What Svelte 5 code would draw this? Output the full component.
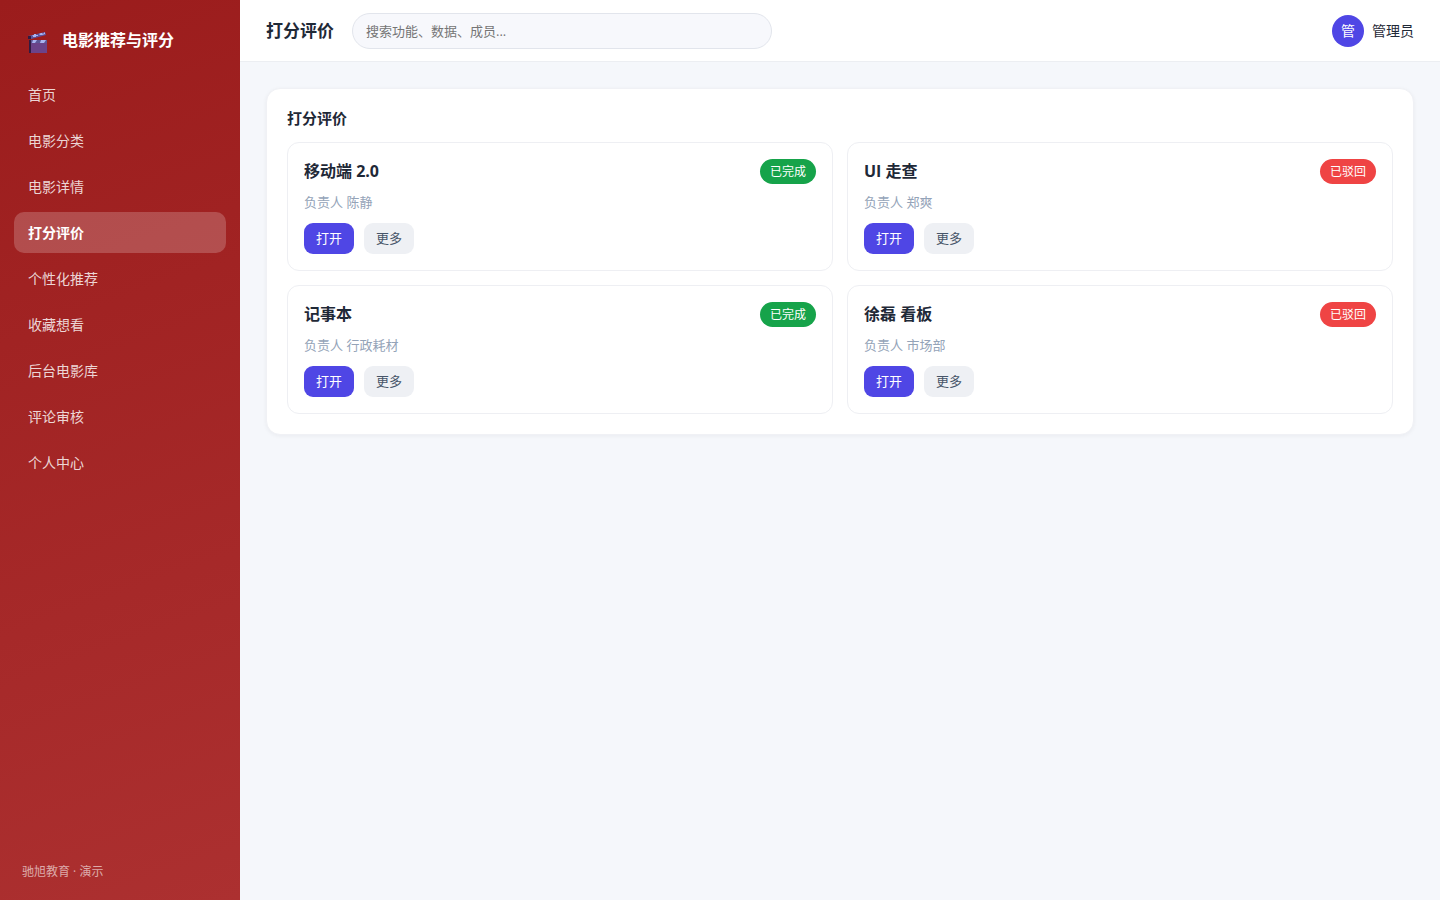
<script>
  let active = "打分评价";
  let keyword = "";

  const menu = [
    "首页",
    "电影分类",
    "电影详情",
    "打分评价",
    "个性化推荐",
    "收藏想看",
    "后台电影库",
    "评论审核",
    "个人中心"
  ];

  const items = [
    { title: "移动端 2.0", owner: "陈静", status: "已完成", type: "done" },
    { title: "UI 走查", owner: "郑爽", status: "已驳回", type: "rejected" },
    { title: "记事本", owner: "行政耗材", status: "已完成", type: "done" },
    { title: "徐磊 看板", owner: "市场部", status: "已驳回", type: "rejected" }
  ];
</script>

<div class="layout">
  <aside class="sidebar">
    <div class="brand">
      <svg class="logo" viewBox="0 -5 22 26" aria-hidden="true">
        <path d="M0 4 17 0l1 3L3 7H0z" fill="#5d55a0" />
        <path d="M0 4h3v3H0z" fill="#321b41" />
        <path d="M5 3h1V2h2v1h2v1H8v1H5V4H4zM11 2l2-1h1l1 1 2-2v2l-3 1h-2z" fill="#a9b4f0" />
        <path d="M1 8h18v13H1z" fill="#6b4389" />
        <path d="M3 8h16v3H3z" fill="#5b5796" />
        <path d="M5 8h4l-2 3H4zM13 8h5l-2 3h-4z" fill="#a9b4f0" />
        <path d="M1 8h2v13H1z" fill="#321b41" />
      </svg>
      <span>电影推荐与评分</span>
    </div>
    <nav class="menu">
      {#each menu as name}
        <a
          href="#{name}"
          class="menu-item"
          class:active={name === active}
          on:click|preventDefault={() => (active = name)}>{name}</a>
      {/each}
    </nav>
    <div class="copyright">驰旭教育 · 演示</div>
  </aside>

  <div class="main">
    <header class="topbar">
      <h1>{active}</h1>
      <input
        type="search"
        class="search"
        aria-label="搜索"
        placeholder="搜索功能、数据、成员..."
        bind:value={keyword} />
      <div class="user">
        <span class="avatar">管</span>
        <span>管理员</span>
      </div>
    </header>

    <main class="content">
      <section class="panel">
        <h2>{active}</h2>
        <div class="grid">
          {#each items as item}
            <article class="card">
              <div class="card-head">
                <h3>{item.title}</h3>
                <span class="badge {item.type}">{item.status}</span>
              </div>
              <p class="owner">负责人 {item.owner}</p>
              <div class="actions">
                <button type="button" class="btn primary">打开</button>
                <button type="button" class="btn">更多</button>
              </div>
            </article>
          {/each}
        </div>
      </section>
    </main>
  </div>
</div>

<style>
  :global(body) {
    margin: 0;
  }

  .layout {
    display: flex;
    min-height: 100vh;
    background: #f5f7fb;
    color: #1f2937;
    font-family: "Open Sans", "Noto Sans CJK SC", sans-serif;
    font-size: 14px;
    line-height: 21px;
  }

  .layout * {
    box-sizing: border-box;
  }

  h1,
  h2,
  h3,
  p {
    margin: 0;
  }

  .sidebar {
    display: flex;
    flex-direction: column;
    flex: 0 0 240px;
    padding: 18px 14px;
    background: linear-gradient(160deg, #9b1c1c, #ac3030);
    color: white;
  }

  .brand {
    display: flex;
    align-items: center;
    gap: 12px;
    padding: 9px 14px 21px;
    font-size: 16px;
    font-weight: 700;
    line-height: 24px;
  }

  .logo {
    width: 22px;
    height: 26px;
  }

  .menu {
    display: flex;
    flex-direction: column;
    gap: 5px;
  }

  .menu-item {
    padding: 10px 14px;
    border-radius: 10px;
    color: rgba(255, 255, 255, 0.82);
    text-decoration: none;
  }

  .menu-item.active {
    background: rgba(255, 255, 255, 0.2);
    color: white;
    font-weight: 700;
  }

  .copyright {
    margin-top: auto;
    padding: 0 8px;
    color: rgba(255, 255, 255, 0.6);
    font-size: 12px;
  }

  .main {
    flex: 1;
    min-width: 0;
  }

  .topbar {
    display: flex;
    align-items: center;
    gap: 18px;
    height: 62px;
    padding: 0 26px;
    background: white;
    border-bottom: 1px solid #eceef2;
  }

  h1 {
    font-size: 17px;
    font-weight: 700;
    line-height: 26px;
  }

  .search {
    width: 420px;
    height: 36px;
    padding: 0 13px;
    border: 1px solid #e2e5ec;
    border-radius: 18px;
    outline: none;
    background: #f7f8fc;
    color: inherit;
    font-family: inherit;
    font-size: 13px;
    appearance: none;
  }

  .search::placeholder {
    color: #757575;
  }

  .user {
    display: flex;
    align-items: center;
    gap: 8px;
    margin-left: auto;
  }

  .avatar {
    display: grid;
    place-items: center;
    width: 32px;
    height: 32px;
    border-radius: 50%;
    background: #4f46e5;
    color: white;
  }

  .content {
    padding: 26px;
  }

  .panel {
    padding: 20px;
    border: 1px solid #f0f1f5;
    border-radius: 14px;
    background: white;
    box-shadow: 0 1px 4px rgba(15, 23, 42, 0.05);
  }

  h2 {
    margin-bottom: 15px;
    font-size: 15px;
    font-weight: 700;
    line-height: 18px;
  }

  .grid {
    display: grid;
    grid-template-columns: 1fr 1fr;
    gap: 14px;
  }

  .card {
    padding: 16px;
    border: 1px solid #eeeff3;
    border-radius: 12px;
  }

  .card-head {
    display: flex;
    align-items: center;
    justify-content: space-between;
  }

  h3 {
    font-size: 16px;
    font-weight: 700;
    line-height: 25px;
  }

  .badge {
    padding: 2px 10px;
    border-radius: 13px;
    color: white;
    font-size: 12px;
  }

  .badge.done {
    background: #16a34a;
  }

  .badge.rejected {
    background: #ef4444;
  }

  .owner {
    margin: 8px 0 10px;
    color: #94a3b8;
    font-size: 13px;
  }

  .actions {
    display: flex;
    gap: 10px;
  }

  .btn {
    padding: 5px 12px;
    border: none;
    border-radius: 9px;
    background: #eef0f4;
    color: #475569;
    font-family: inherit;
    font-size: 13px;
    line-height: 21px;
    cursor: pointer;
  }

  .btn.primary {
    background: #4f46e5;
    color: white;
  }
</style>
